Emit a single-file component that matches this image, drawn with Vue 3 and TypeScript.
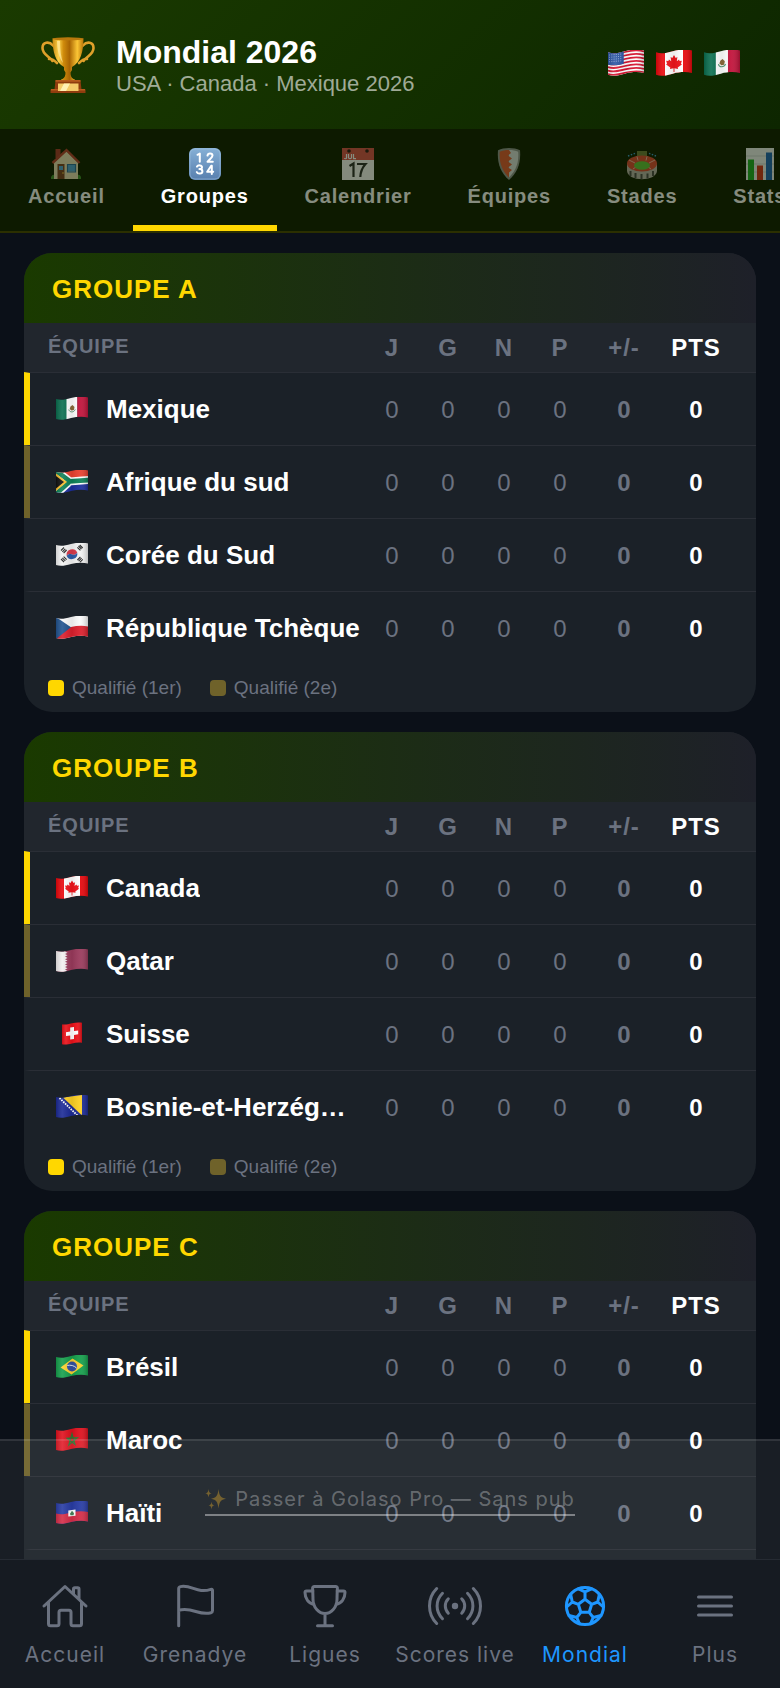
<script setup lang="ts">
import { ref } from 'vue'

interface Tab {
  id: string
  label: string
}

interface Team {
  code: string
  name: string
}

interface Group {
  letter: string
  teams: Team[]
}

const tabs: Tab[] = [
  { id: 'home', label: 'Accueil' },
  { id: 'groups', label: 'Groupes' },
  { id: 'calendar', label: 'Calendrier' },
  { id: 'shield', label: 'Équipes' },
  { id: 'stadium', label: 'Stades' },
  { id: 'stats', label: 'Stats' },
]
const activeTab = ref('groups')

const hosts: string[] = ['us', 'ca', 'mx']

const groups: Group[] = [
  {
    letter: 'A',
    teams: [
      { code: 'mx', name: 'Mexique' },
      { code: 'za', name: 'Afrique du sud' },
      { code: 'kr', name: 'Corée du Sud' },
      { code: 'cz', name: 'République Tchèque' },
    ],
  },
  {
    letter: 'B',
    teams: [
      { code: 'ca', name: 'Canada' },
      { code: 'qa', name: 'Qatar' },
      { code: 'ch', name: 'Suisse' },
      { code: 'ba', name: 'Bosnie-et-Herzégovine' },
    ],
  },
  {
    letter: 'C',
    teams: [
      { code: 'br', name: 'Brésil' },
      { code: 'ma', name: 'Maroc' },
      { code: 'ht', name: 'Haïti' },
      { code: 'sct', name: 'Écosse' },
    ],
  },
]

const navItems: Tab[] = [
  { id: 'accueil', label: 'Accueil' },
  { id: 'grenadye', label: 'Grenadye' },
  { id: 'ligues', label: 'Ligues' },
  { id: 'scores', label: 'Scores live' },
  { id: 'mondial', label: 'Mondial' },
  { id: 'plus', label: 'Plus' },
]
const activeNav = ref('mondial')
</script>

<template>
  <div class="app">
    <svg class="sprites" aria-hidden="true">
      <defs>
        <clipPath id="wave">
          <path d="M0 2c5 1.6 9 .6 15-1s12-1.8 17-.6v20c-5-1.2-11-1-17 .6c-6 1.6-10 2.6-15 1z" />
        </clipPath>
        <clipPath id="wave-square">
          <path d="M6 2.400c4 .6 6-.4 10-1.200s7-1 10-.4v20c-3-.6-6-.4-10 .6s-7 1.600-10 .8z" />
        </clipPath>
        <linearGradient id="fold" x1="0" x2="1" y1="0" y2="0">
          <stop offset="0" stop-color="#000" stop-opacity=".15" />
          <stop offset=".2" stop-color="#fff" stop-opacity=".1" />
          <stop offset=".5" stop-color="#000" stop-opacity=".08" />
          <stop offset=".75" stop-color="#fff" stop-opacity=".06" />
          <stop offset="1" stop-color="#000" stop-opacity=".22" />
        </linearGradient>
        <linearGradient id="gold" x1="0" x2="1" y1="0" y2="0">
          <stop offset="0" stop-color="#c98a10" />
          <stop offset=".2" stop-color="#fbd24a" />
          <stop offset=".35" stop-color="#d08c0c" />
          <stop offset=".55" stop-color="#a96503" />
          <stop offset=".8" stop-color="#fbc535" />
          <stop offset="1" stop-color="#b87408" />
        </linearGradient>
        <linearGradient id="keycap" x1="0" x2="0" y1="0" y2="1">
          <stop offset="0" stop-color="#86b0d6" />
          <stop offset="1" stop-color="#587fae" />
        </linearGradient>
      </defs>

      <symbol id="flag-mx" viewBox="0 0 32 24">
        <g clip-path="url(#wave)">
          <path fill="#0a6e4f" d="M0 0h11v24H0z" />
          <path fill="#fff" d="M10.500 0h11v24h-11z" />
          <path fill="#c2123a" d="M21.300 0H32v24H21.300z" />
          <path fill="#8a6a3a" d="M14.500 9.500l2-1.500 2 2-.6 3-2.400.6-1.800-1.600z" />
          <path fill="none" stroke="#5d9a78" d="M12.800 12.500c.6 3 5 3.400 6.400 0" />
          <path fill="url(#fold)" d="M0 0h32v24H0z" />
        </g>
      </symbol>
      <symbol id="flag-ca" viewBox="0 0 32 24">
        <g clip-path="url(#wave)">
          <path fill="#e8060b" d="M0 0h32v24H0z" />
          <path fill="#fff" d="M8 0h16v24H8z" />
          <path fill="#f0141a" d="M16 4.500l1.500 2.500 1.500-.7-.5 3.700 2-1.600.5 1.300 2-.2-.8 2.500.8.800-3.700 2.800.3 1.200-3.200-.5V19.500h-.8V16.300l-3.200.5.3-1.200L9 12.800l.8-.8L9 9.500l2 .2.500-1.300 2 1.600-.5-3.700 1.500.7z" />
          <path fill="url(#fold)" d="M0 0h32v24H0z" />
        </g>
      </symbol>
      <symbol id="flag-us" viewBox="0 0 32 24">
        <g clip-path="url(#wave)">
          <path fill="#fff" d="M0 0h32v24H0z" />
          <g fill="none" stroke="#d8132f" stroke-width="1.550">
            <path d="M0 2.800c5 1.600 9 .6 15-1s12-1.800 17-.6M0 5.900c5 1.600 9 .6 15-1s12-1.800 17-.6M0 9c5 1.600 9 .6 15-1s12-1.800 17-.6M0 12.100c5 1.600 9 .6 15-1s12-1.800 17-.6M0 15.200c5 1.600 9 .6 15-1s12-1.800 17-.6M0 18.300c5 1.600 9 .6 15-1s12-1.800 17-.6M0 21.400c5 1.600 9 .6 15-1s12-1.800 17-.6" />
          </g>
          <path fill="#2b55a4" d="M0 0h14v12.200c-5 1.400-9 1.800-14 .8z" />
          <path stroke="#a9bde0" stroke-width=".8" stroke-dasharray=".8 1.200" d="M1 4.500l12-1M1 6.500l12-1M1 8.500l12-1M1 10.500l12-1" />
          <path fill="url(#fold)" d="M0 0h32v24H0z" />
        </g>
      </symbol>
      <symbol id="flag-za" viewBox="0 0 32 24">
        <g clip-path="url(#wave)">
          <path fill="#e8402e" d="M0 0h32v12H0z" />
          <path fill="#1b2d9b" d="M0 12h32v12H0z" />
          <path fill="none" stroke="#fff" stroke-width="8" d="M-1 0l15 11.400 19-1.400M-1 25l15-13.600" />
          <path fill="none" stroke="#0d8057" stroke-width="4.600" d="M-1 0l15 11.400 19-1.400M-1 25l15-13.600" />
          <path fill="#fbbf2d" d="M0 3.500l11 8.500L0 21z" />
          <path fill="#111" d="M0 6l8 6-8 6.500z" />
          <path fill="url(#fold)" d="M0 0h32v24H0z" />
        </g>
      </symbol>
      <symbol id="flag-kr" viewBox="0 0 32 24">
        <g clip-path="url(#wave)">
          <path fill="#f4f4f4" d="M0 0h32v24H0z" />
          <path fill="#d8394a" d="M10.700 13a5.600 5.600 0 0 1 10.500-3.600c-1 2.400-3.600 2.600-5.200 2s-4-.6-5.300 1.600z" />
          <path fill="#2a5ba8" d="M10.700 13a5.600 5.600 0 0 0 10.500-3.600c-1 2.400-3.600 2.600-5.200 2s-4-.6-5.300 1.600z" />
          <g fill="none" stroke="#222" stroke-width="1.100">
            <path d="M5 7.500l3-3M6.300 8.800l3-3M7.600 10l3-3M22.500 3l3 3M23.700 2l3 3M21.400 4.300l3 3M5 16l3 3M6.300 14.800l3 3M7.600 13.600l3 3M21.400 17l3-3M22.600 18.200l3-3M23.800 19.400l3-3" />
          </g>
          <path fill="url(#fold)" d="M0 0h32v24H0z" />
        </g>
      </symbol>
      <symbol id="flag-cz" viewBox="0 0 32 24">
        <g clip-path="url(#wave)">
          <path fill="#fafafa" d="M0 0h32v24H0z" />
          <path fill="#dc1f2c" d="M0 12c5 1.600 9 .6 15-1s12-1.800 17-.6V24H0z" />
          <path fill="#21538f" d="M0 1l15 10.200L0 23z" />
          <path fill="url(#fold)" d="M0 0h32v24H0z" />
        </g>
      </symbol>
      <symbol id="flag-qa" viewBox="0 0 32 24">
        <g clip-path="url(#wave)">
          <path fill="#9a3a5c" d="M0 0h32v24H0z" />
          <path fill="#f2eff0" d="M0 0h9l2.500 1.200L9 2.500l2.500 1.300L9 5l2.500 1.300L9 7.600l2.500 1.300L9 10.200l2.500 1.300L9 12.800l2.500 1.300L9 15.400l2.500 1.300L9 18l2.500 1.300L9 20.600l2.500 1.300L9 23.200V24H0z" />
          <path fill="url(#fold)" d="M0 0h32v24H0z" />
        </g>
      </symbol>
      <symbol id="flag-ch" viewBox="0 0 32 24">
        <g clip-path="url(#wave-square)">
          <path fill="#ea1018" d="M0 0h32v24H0z" />
          <path fill="#fff" d="M14.200 5.600l3.800-.5v4l4.200-.6v3.800l-4.200.6v4l-3.800.5v-4l-4.200.5v-3.700l4.200-.6z" />
          <path fill="url(#fold)" d="M6 0h20v24H6z" />
        </g>
      </symbol>
      <symbol id="flag-ba" viewBox="0 0 32 24">
        <g clip-path="url(#wave)">
          <path fill="#1b2a96" d="M0 0h32v24H0z" />
          <path fill="#fcd023" d="M7 2.500L26 0v20.500z" />
          <path stroke="#fff" stroke-width="1.800" stroke-dasharray="1.600 1" d="M3.500 3l19.500 19" />
          <path fill="url(#fold)" d="M0 0h32v24H0z" />
        </g>
      </symbol>
      <symbol id="flag-br" viewBox="0 0 32 24">
        <g clip-path="url(#wave)">
          <path fill="#15a04c" d="M0 0h32v24H0z" />
          <path fill="#fbd12f" d="M4.500 12.500L16.500 3.500l11 7L15.500 19.500z" />
          <circle cx="16" cy="11.500" r="5" fill="#32509f" />
          <path fill="none" stroke="#dfe8f2" d="M11.300 10.500c3-.8 7 0 9.300 2.600" />
          <path fill="url(#fold)" d="M0 0h32v24H0z" />
        </g>
      </symbol>
      <symbol id="flag-ma" viewBox="0 0 32 24">
        <g clip-path="url(#wave)">
          <path fill="#e0101d" d="M0 0h32v24H0z" />
          <path fill="none" stroke="#2b7a34" stroke-width="1.200" d="M16 5.800l3 10.700-8-6.200 10.400-.7-8.600 7.400z" />
          <path fill="url(#fold)" d="M0 0h32v24H0z" />
        </g>
      </symbol>
      <symbol id="flag-ht" viewBox="0 0 32 24">
        <g clip-path="url(#wave)">
          <path fill="#1a2f9f" d="M0 0h32v24H0z" />
          <path fill="#d31f3c" d="M0 12.500c5 1.600 9 .6 15-1s12-1.800 17-.6V24H0z" />
          <path fill="#fff" d="M12.300 9.500l7.200-1v6.300l-7.200.8z" />
          <path fill="#3c7a50" d="M14 12.800l2-3 2 2.500-.5 2h-3z" />
          <path fill="url(#fold)" d="M0 0h32v24H0z" />
        </g>
      </symbol>
      <symbol id="flag-sct" viewBox="0 0 32 24">
        <g clip-path="url(#wave)">
          <path fill="#0a5eb8" d="M0 0h32v24H0z" />
          <path stroke="#fff" stroke-width="3" d="M0 2l32 19M0 22L32 1" />
          <path fill="url(#fold)" d="M0 0h32v24H0z" />
        </g>
      </symbol>

      <symbol id="tab-home" viewBox="0 0 32 32">
        <path fill="#3f8f2c" d="M1 31c-.6-3 2-5 4-4h22c2.500-1 4.500 1 4 4z" />
        <path fill="#a93a2c" d="M5.500 1h5v9h-5z" />
        <path fill="#ecdfb8" d="M4 14.500L16.500 3 28 14.500V31H4z" />
        <path fill="none" stroke="#b5402f" stroke-width="2.400" d="M2.500 15L16.500 2.200 29.500 15" />
        <path fill="#7c4325" d="M7.500 16h7v15h-7z" />
        <path fill="#52a4d8" d="M9 18h4v4H9zM18 17h7v6.500h-7z" />
        <path fill="none" stroke="#2a6d9c" stroke-width="1.200" d="M17.500 16.500h8v7.500h-8z" />
        <circle cx="13" cy="25" r=".8" fill="#f7cf4d" />
      </symbol>
      <symbol id="tab-groups" viewBox="0 0 32 32">
        <rect width="32" height="32" rx="6" fill="url(#keycap)" />
        <rect x="1" y="1" width="30" height="30" rx="5" fill="none" stroke="#a8c8e4" stroke-opacity=".5" />
        <g fill="none" stroke="#fff" stroke-width="2" stroke-linejoin="round" stroke-linecap="round">
          <path d="M8.500 6.800L10.800 5.500v8.200M18.500 7.600c.4-3 5-2.800 5 0 0 2-3 3.600-5 6.200h5.300M8 18.600c1.200-2 5-1.400 5 .6 0 1.300-1.200 1.900-2.600 1.900 1.700 0 3 .7 3 2.300 0 2.600-4.600 2.900-5.600.7M22.800 26v-8.200h-.6l-4 6h6" />
        </g>
      </symbol>
      <symbol id="tab-calendar" viewBox="0 0 32 32">
        <path fill="#fafafa" d="M0 0h32v32H0z" />
        <path fill="#d8524a" d="M0 0h32v12H0z" />
        <circle cx="7" cy="3" r="1.800" fill="#2c1a18" />
        <circle cx="25" cy="3" r="1.800" fill="#2c1a18" />
        <path fill="none" stroke="#fff" stroke-width="1.200" d="M4.500 6v4c0 1-1.800 1-2 0M6.500 6v3.500c0 1.500 3 1.500 3 0V6M11.500 6v4.600h2.500" />
        <path fill="none" stroke="#2c2c2c" stroke-width="2.200" d="M7.500 18l4-2.500V29M15 16h8.500c-3.500 4-5 8-5.200 13" />
      </symbol>
      <symbol id="tab-shield" viewBox="0 0 32 32">
        <path fill="#8f948f" d="M16 0c4 0 8 .8 11 2.200 1 12-2 22-11 29.800C7 24 4 14 5 2.200 8 .8 12 0 16 0z" />
        <path fill="#d9dedd" d="M16 2c3.600 0 6.600.6 9.200 1.800C26 14 23.500 22 16 29.500z" />
        <path fill="#e05a33" d="M16 2C12.400 2 9.400 2.600 6.800 3.800 6 14 8.500 22 16 29.500v-5l3-2.500-4-2.500 4-3-4-3 4-3-4-3 3-2.500z" />
      </symbol>
      <symbol id="tab-stadium" viewBox="0 0 32 32">
        <path fill="#6e7d3a" d="M11 3h10v6H11z" />
        <path stroke="#3f9fd0" stroke-width="1.400" stroke-dasharray="1.500 1.500" d="M2 8l8-3M30 8l-8-3" />
        <path fill="#b9b3a9" d="M1 15v8c1 11 29 11 30 0v-8z" />
        <path stroke="#4b4a48" stroke-width="2" d="M4.500 23v5M9.500 25v5M15.500 26v5M21.500 25.500v5M27 23v5" />
        <ellipse cx="16" cy="15.500" rx="15" ry="8" fill="#dd4a33" />
        <path stroke="#f4b5a0" d="M3 12l6 3M29 12l-6 3M7 21l3-2M25 21l-3-2M11 8.500l1 4M21 8.500l-1 4" />
        <ellipse cx="16" cy="17.500" rx="8" ry="4.200" fill="#62c63a" />
      </symbol>
      <symbol id="tab-stats" viewBox="0 0 32 32">
        <path fill="#f1f4f4" d="M2 0h28v32H2z" />
        <path stroke="#c5cccc" stroke-width=".8" d="M2 8h28M2 16h28M2 24h28" />
        <path fill="#1eae26" d="M4 11.500h6V32H4z" />
        <path fill="#d3341c" d="M13 17.500h6V32h-6z" />
        <path fill="#1c66b8" d="M22 4.500h6V32h-6z" />
      </symbol>

      <symbol id="nav-accueil" viewBox="0 0 56 48">
        <path d="M7 24L28 4.500 49 24M11.500 20v21.700a2 2 0 0 0 2 2h6.500a2 2 0 0 0 2-2V30.300a2 2 0 0 1 2-2h8a2 2 0 0 1 2 2v11.400a2 2 0 0 0 2 2h6.500a2 2 0 0 0 2-2V20M36.500 12V7a1.300 1.300 0 0 1 1.300-1.300h2.900A1.300 1.300 0 0 1 42 7v10" />
      </symbol>
      <symbol id="nav-grenadye" viewBox="0 0 56 48">
        <path d="M11.700 43.700V6.800c0-1.200.7-1.900 1.800-2.200 11-2.200 17 7.400 30.300 2.700.9-.3 1.700.1 1.700 1v20.400c0 1-.6 1.700-1.600 2C31.500 34 25.500 24.500 11.700 28.300" />
      </symbol>
      <symbol id="nav-ligues" viewBox="0 0 56 48">
        <path d="M17.300 4.500h21.400a1.700 1.700 0 0 1 1.700 1.800c-.3 4-.3 7-.4 11.200 0 8-6 14-12 14s-12-6-12-14c-.1-4.200-.1-7.200-.4-11.200a1.700 1.700 0 0 1 1.700-1.800zM16 9H9.500A1.500 1.500 0 0 0 8 10.500c0 6 3.500 11 9 12M40 9h6.500a1.500 1.500 0 0 1 1.500 1.500c0 6-3.500 11-9 12M28 31.500v12.200M20.500 43.700h15" />
      </symbol>
      <symbol id="nav-scores" viewBox="0 0 56 48">
        <circle cx="28" cy="24" r="3.200" fill="currentColor" stroke="none" />
        <path d="M21.300 16.800c-4 4.200-4 10.200 0 14.400M15.500 11.300c-7.200 7.300-7.200 18.100 0 25.400M9.700 6.500c-9.600 9.600-9.600 25.400 0 35M34.700 16.800c4 4.200 4 10.200 0 14.400M40.500 11.300c7.200 7.300 7.200 18.100 0 25.400M46.300 6.500c9.600 9.600 9.600 25.400 0 35" />
      </symbol>
      <symbol id="nav-mondial" viewBox="0 0 56 48">
        <circle cx="28" cy="24" r="18.600" />
        <path d="M28 17.300l6.700 5-2.500 8h-8.400l-2.500-8zM28 17.300V9.800M34.700 22.300l6-2.300M32.200 30.300l4 5.200M23.800 30.300l-4 5.200M21.300 22.300l-6-2.300M21.500 6.800l6.500 3 6.500-3M42.300 12.500L40.700 20l5.600 5M44 33.500l-7.800 2-2.700 6.300M12 33.500l7.800 2 2.700 6.300M13.700 12.500l1.600 7.500-5.600 5" />
      </symbol>
      <symbol id="nav-plus" viewBox="0 0 56 48">
        <path d="M11.500 15h33M11.500 24h33M11.500 33h33" />
      </symbol>
    </svg>

    <header class="hero">
      <svg class="cup" viewBox="0 0 54 56" aria-hidden="true">
        <path fill="none" stroke="#dfa02a" stroke-width="2.600" stroke-linecap="round" d="M12 8.500C8 4 1.500 5 1.500 11c0 7 7 8 10 13M8 22c3-.5 5 1 8 4M42 8.500C46 4 52.500 5 52.500 11c0 7-7 8-10 13M46 22c-3-.5-5 1-8 4" />
        <path fill="url(#gold)" d="M11.500 1.500h31c0 13-3 24-11.500 28.500v3l-1.500 2.500c0 3 .5 5 3 6.500 2 .6 2.500 1.500 2.500 3H19c0-1.500.5-2.400 2.500-3 2.500-1.500 3-3.500 3-6.500L23 33v-3C14.500 25.500 11.500 14.500 11.500 1.500z" />
        <ellipse cx="27" cy="1.800" rx="15.500" ry="1.600" fill="#b9780c" />
        <path fill="#ffe9a0" opacity=".7" d="M16 4c0 9 2 17 6 22-2-6-3-13-3-22z" />
        <path fill="#8f3c0e" d="M14.500 43.500h25l1 9h4v3.500h-35v-3.500h4z" />
        <path fill="#b65a1c" d="M14.500 43h25v1.800h-25zM10 52h34v1.500H10z" />
        <path fill="#f5cb69" d="M17 46.500h20.500V54H17z" />
        <path fill="#fff0b4" d="M23 46.500h6L25 54h-6z" />
      </svg>
      <div class="hero-text">
        <h1>Mondial 2026</h1>
        <p>USA · Canada · Mexique 2026</p>
      </div>
      <div class="hosts">
        <svg v-for="code in hosts" :key="code" class="host-flag" aria-hidden="true"><use :href="'#flag-' + code" /></svg>
      </div>
    </header>

    <nav class="tabs">
      <button
        v-for="tab in tabs"
        :key="tab.id"
        type="button"
        class="tab"
        :class="{ active: activeTab === tab.id }"
        @click="activeTab = tab.id"
      >
        <svg class="tab-icon" aria-hidden="true"><use :href="'#tab-' + tab.id" /></svg>
        <span>{{ tab.label }}</span>
      </button>
    </nav>

    <div class="body">
      <main class="groups">
        <section v-for="group in groups" :key="group.letter" class="card">
          <h2>GROUPE {{ group.letter }}</h2>
          <table>
            <colgroup>
              <col />
              <col class="c-num" />
              <col class="c-num" />
              <col class="c-num" />
              <col class="c-num" />
              <col class="c-diff" />
              <col class="c-pts" />
            </colgroup>
            <thead>
              <tr>
                <th class="team-head" scope="col">ÉQUIPE</th>
                <th scope="col">J</th>
                <th scope="col">G</th>
                <th scope="col">N</th>
                <th scope="col">P</th>
                <th scope="col">+/-</th>
                <th class="pts" scope="col">PTS</th>
              </tr>
            </thead>
            <tbody>
              <tr v-for="team in group.teams" :key="team.code">
                <td class="team-cell">
                  <div class="team">
                    <svg class="flag" aria-hidden="true"><use :href="'#flag-' + team.code" /></svg>
                    <span class="name">{{ team.name }}</span>
                  </div>
                </td>
                <td class="num">0</td>
                <td class="num">0</td>
                <td class="num">0</td>
                <td class="num">0</td>
                <td class="num diff">0</td>
                <td class="num pts">0</td>
              </tr>
            </tbody>
          </table>
          <div class="legend">
            <span class="key"><i class="swatch first"></i>Qualifié (1er)</span>
            <span class="key"><i class="swatch second"></i>Qualifié (2e)</span>
          </div>
        </section>
      </main>

      <aside class="promo">
        <a href="#pro">
          <svg class="sparkles" viewBox="0 0 22 22" aria-hidden="true">
            <path d="M13.500 1c.8 6.500 2 9 7.500 9.700-5.500.8-6.700 3.300-7.500 9.800-.8-6.500-2-9-7.500-9.800 5.500-.7 6.700-3.200 7.500-9.700zM3.500 1c.4 3 .9 4 3.200 4.300C4.400 5.700 3.900 6.700 3.500 9.500 3.100 6.700 2.600 5.700.3 5.300 2.600 5 3.100 4 3.500 1zM6.500 13.500c.3 2.700.8 3.600 3 4-2.200.3-2.700 1.200-3 4-.3-2.800-.8-3.700-3-4 2.200-.4 2.700-1.300 3-4z" />
          </svg>
          Passer à Golaso Pro — Sans pub
        </a>
      </aside>
    </div>

    <nav class="bottom-nav">
      <button
        v-for="item in navItems"
        :key="item.id"
        type="button"
        class="nav-item"
        :class="{ active: activeNav === item.id }"
        @click="activeNav = item.id"
      >
        <svg class="nav-icon" aria-hidden="true"><use :href="'#nav-' + item.id" /></svg>
        <span>{{ item.label }}</span>
      </button>
    </nav>
  </div>
</template>

<style>
body {
  margin: 0;
  background: #0b1018;
}
</style>

<style scoped>
.app {
  display: flex;
  flex-direction: column;
  height: 100vh;
  overflow: hidden;
  background: #0b1018;
  color: #fff;
  font-family: 'Liberation Sans', Arial, sans-serif;
}

.sprites {
  position: absolute;
  width: 0;
  height: 0;
}

button {
  margin: 0;
  border: 0;
  background: none;
  font: inherit;
  cursor: pointer;
}

.hero {
  display: flex;
  flex: none;
  align-items: center;
  gap: 20px;
  box-sizing: border-box;
  height: 129px;
  padding: 0 40px;
  background: linear-gradient(135deg, #1a3a00, #0d2600);
}

.cup {
  width: 56px;
  height: 56px;
}

.hero-text {
  flex: 1;
}

.hero h1 {
  margin: 0;
  font-size: 32px;
  line-height: 38px;
}

.hero p {
  margin: 0;
  color: rgba(255, 255, 255, 0.6);
  font-size: 22px;
  line-height: 26px;
}

.hosts {
  display: flex;
  gap: 12px;
  padding-bottom: 2px;
}

.host-flag {
  width: 36px;
  height: 27px;
}

.tabs {
  display: flex;
  flex: none;
  overflow: hidden;
  border-bottom: 2px solid #2b2f00;
  background: #0d1a00;
}

.tab {
  display: flex;
  flex: none;
  flex-direction: column;
  align-items: center;
  gap: 4px;
  padding: 19px 28px 17px;
  border-bottom: 6px solid transparent;
  color: rgba(255, 255, 255, 0.5);
  font-size: 20px;
  font-weight: 700;
  line-height: 24px;
  letter-spacing: 0.04em;
}

.tab-icon {
  width: 32px;
  height: 32px;
  opacity: 0.5;
}

.tab.active {
  border-bottom-color: #ffd700;
  color: #fff;
}

.tab.active .tab-icon {
  opacity: 1;
}

.body {
  position: relative;
  flex: 1;
  min-height: 0;
}

.groups {
  display: flex;
  flex-direction: column;
  gap: 20px;
  box-sizing: border-box;
  height: 100%;
  padding: 20px 24px;
  overflow-y: auto;
  scrollbar-width: none;
}

.card {
  flex: none;
  overflow: hidden;
  border-radius: 28px;
  background: #1b2128;
}

.card h2 {
  margin: 0;
  padding: 2px 28px 0;
  background: linear-gradient(90deg, #1a3a00, #1e2029);
  color: #ffd700;
  font-size: 26px;
  line-height: 68px;
  letter-spacing: 1px;
}

table {
  width: 100%;
  border-spacing: 0;
  table-layout: fixed;
}

.c-num {
  width: 56px;
}

.c-diff {
  width: 72px;
}

.c-pts {
  width: 96px;
}

th {
  height: 49px;
  padding: 0;
  background: #21262d;
  color: #6b7280;
  font-size: 24px;
  letter-spacing: 1px;
}

th.team-head {
  height: 47px;
  padding: 0 0 2px 24px;
  font-size: 20px;
  text-align: left;
}

td {
  height: 72px;
  padding: 0;
  border-top: 1px solid #2a2e36;
}

.num {
  height: 70px;
  padding-top: 2px;
  color: #6b7280;
  font-size: 24px;
  text-align: center;
}

.team-cell {
  border-left: 6px solid transparent;
}

tr:nth-child(1) .team-cell {
  border-left-color: #ffd700;
}

tr:nth-child(2) .team-cell {
  border-left-color: #6f622a;
}

.diff {
  font-weight: 700;
}

th.pts,
td.pts {
  padding-right: 24px;
  color: #fff;
  font-weight: 700;
}

.team {
  display: flex;
  align-items: center;
  gap: 18px;
  padding: 0 3px 0 26px;
}

.flag {
  flex: none;
  width: 32px;
  height: 24px;
}

.name {
  overflow: hidden;
  color: #fff;
  font-size: 26px;
  font-weight: 700;
  line-height: 32px;
  text-overflow: ellipsis;
  white-space: nowrap;
}

.legend {
  display: flex;
  gap: 28px;
  padding: 12px 24px;
  color: #6b7280;
  font-size: 19px;
  line-height: 24px;
}

.key {
  display: flex;
  align-items: center;
  gap: 8px;
}

.swatch {
  width: 16px;
  height: 16px;
  border-radius: 4px;
}

.first {
  background: #ffd700;
}

.second {
  background: #6f622a;
}

.promo {
  position: absolute;
  right: 0;
  bottom: 0;
  left: 0;
  display: flex;
  align-items: center;
  justify-content: center;
  box-sizing: border-box;
  height: 120px;
  border-top: 2px solid rgba(255, 255, 255, 0.1);
  background: rgba(255, 255, 255, 0.06);
  font-family: Inter, sans-serif;
}

.promo a {
  display: flex;
  align-items: center;
  gap: 8px;
  border-bottom: 2px solid rgba(255, 255, 255, 0.4);
  color: rgba(255, 255, 255, 0.3);
  font-size: 20px;
  line-height: 30px;
  letter-spacing: 1px;
  text-decoration: none;
}

.sparkles {
  width: 22px;
  height: 22px;
  fill: #a8842e;
  opacity: 0.6;
}

.bottom-nav {
  display: grid;
  flex: none;
  grid-template-columns: repeat(6, 1fr);
  border-top: 1px solid #262b33;
  background: #161b22;
  font-family: Inter, sans-serif;
}

.nav-item {
  display: flex;
  flex-direction: column;
  align-items: center;
  gap: 11px;
  padding: 22px 0 19px;
  color: #6b7280;
  font-size: 21px;
  line-height: 28px;
  letter-spacing: 1px;
  white-space: nowrap;
}

.nav-icon {
  width: 56px;
  height: 48px;
  fill: none;
  stroke: currentColor;
  stroke-width: 3px;
  stroke-linecap: round;
  stroke-linejoin: round;
}

.nav-item.active {
  color: #1e96ff;
}
</style>
